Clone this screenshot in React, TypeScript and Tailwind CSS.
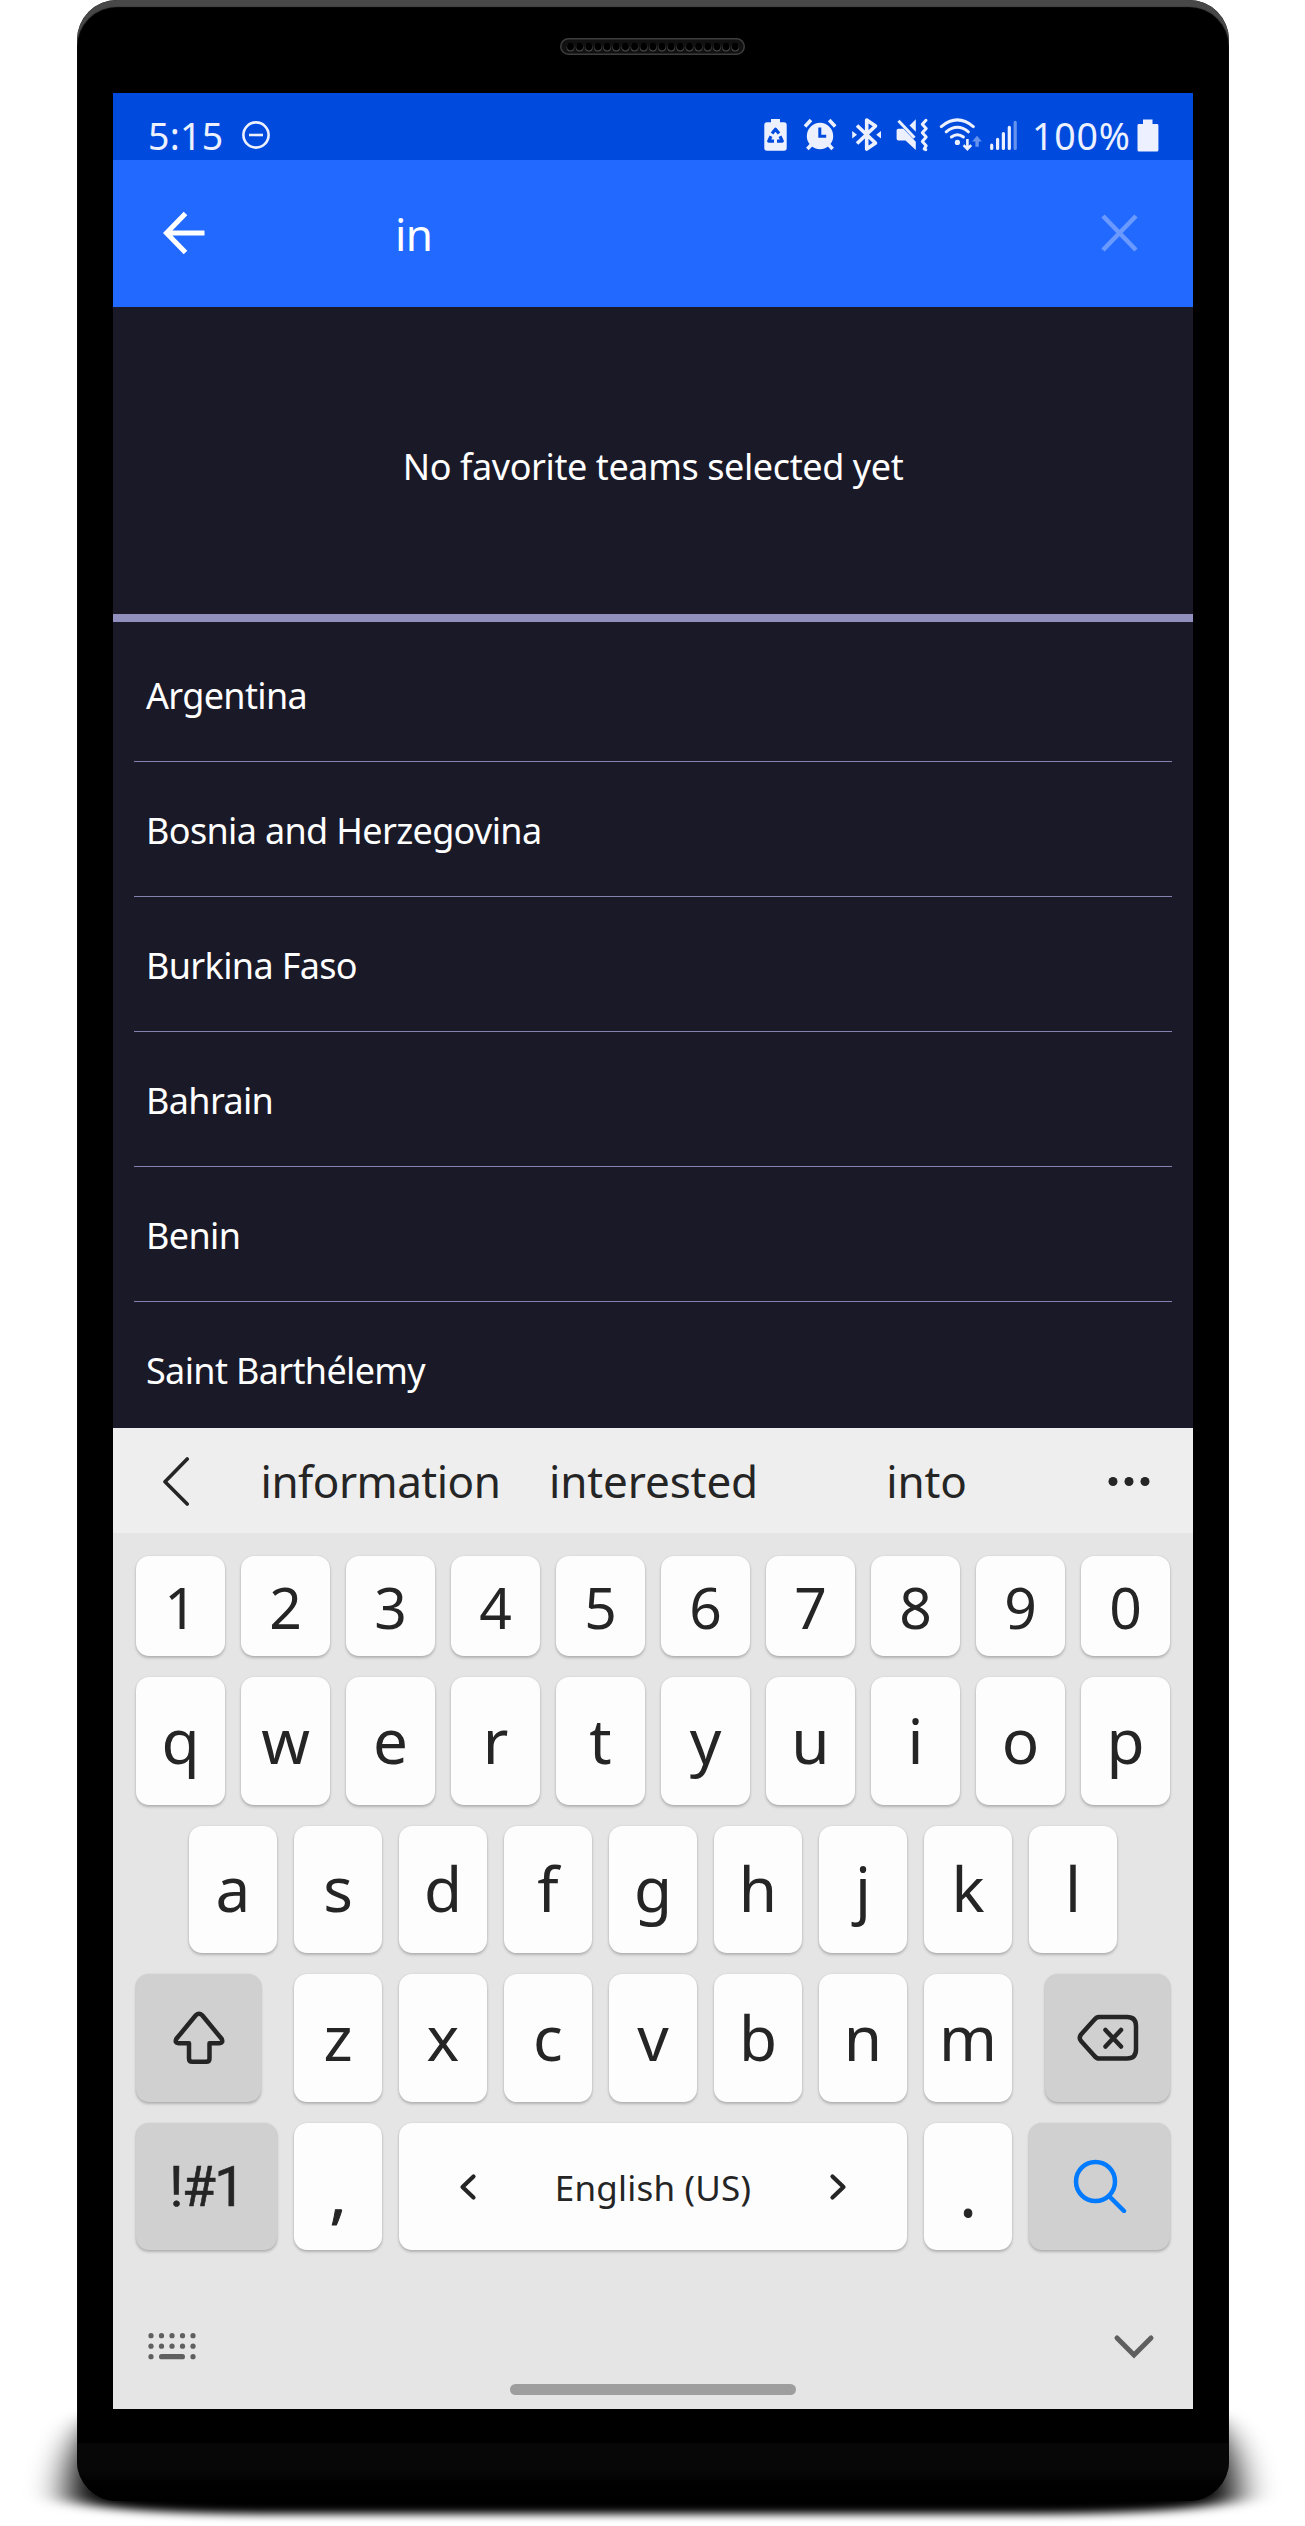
import React from "react";

const TEAMS = [
  "Argentina",
  "Bosnia and Herzegovina",
  "Burkina Faso",
  "Bahrain",
  "Benin",
  "Saint Barthélemy",
];
const SUGGESTIONS = ["information", "interested", "into"];
const HOLES = Array.from({ length: 19 }, (_, i) => 10.5 + i * 9.15);

const KEY_SHADOW = "shadow-[0_2px_3px_rgba(0,0,0,0.22),0_0_2px_rgba(0,0,0,0.10)]";

function Key({
  children,
  className = "",
  muted = false,
}: {
  children: React.ReactNode;
  className?: string;
  muted?: boolean;
}) {
  return (
    <div
      className={`${KEY_SHADOW} flex items-center justify-center rounded-[13px] leading-none text-[#252525] ${
        muted ? "bg-[#d0d0d0]" : "bg-[#fdfdfd]"
      } ${className}`}
    >
      {children}
    </div>
  );
}

function Letters({ text, className }: { text: string; className: string }) {
  return (
    <>
      {text.split("").map((c) => (
        <Key key={c} className={`pb-[3px] text-[62px] ${className}`}>
          {c}
        </Key>
      ))}
    </>
  );
}

function GroundShadow() {
  return (
    <svg className="absolute inset-x-0 bottom-0" width="1305" height="146" viewBox="0 2380 1305 146">
      <defs>
        <filter id="ground" filterUnits="userSpaceOnUse" x="-60" y="2360" width="1425" height="200">
          <feGaussianBlur stdDeviation="19 4" />
        </filter>
      </defs>
      <path
        filter="url(#ground)"
        d="M110 2414 C84 2424 68 2465 69 2495 C70 2507 140 2513 260 2514 L1045 2514 C1165 2513 1235 2507 1236 2495 C1237 2465 1221 2424 1195 2414 Z"
      />
    </svg>
  );
}

function Speaker() {
  return (
    <svg width="185" height="17" viewBox="0 0 185 17">
      <rect x="0.75" y="0.75" width="183.5" height="15.5" rx="7.75" fill="#111" stroke="#3d3d3d" strokeWidth="1.5" />
      {HOLES.map((x) => (
        <g key={x}>
          <ellipse cx={x} cy="9.6" rx="3.9" ry="4" fill="#4a4a4a" />
          <ellipse cx={x} cy="8.6" rx="3.5" ry="3.8" fill="#000" />
        </g>
      ))}
    </svg>
  );
}

function DoNotDisturb() {
  return (
    <svg width="30" height="30" viewBox="0 0 30 30" fill="none" stroke="#edf1ff" strokeWidth="2.6">
      <circle cx="15" cy="15" r="12.6" />
      <path d="M8 15h14" />
    </svg>
  );
}

/* Tray icons between the clock and the battery percentage */
function TrayIcons() {
  return (
    <svg width="256" height="36" viewBox="762 117 256 36" fill="#edf1ff" stroke="none">
      <path d="M771 119h9v3.3h4q2.7 0 2.7 2.7v23q0 2.7-2.7 2.7h-17q-2.7 0-2.7-2.7v-23q0-2.7 2.7-2.7h4z" />
      <g fill="none" stroke="#004bde" strokeWidth="3.2" strokeLinejoin="round">
        <path d="M772 133.6l3.5-4.400 3.5 4.400" />
        <path d="M771 136.200l-2.300 4.900h5.300" />
        <path d="M780 136.200l2.300 4.900h-5.300" />
      </g>

      <circle cx="820" cy="136" r="13.2" />
      <g fill="none" stroke="#edf1ff" strokeWidth="3.6">
        <path d="M805 126.5l6-6.4M835.2 126.5l-6-6.4" />
        <path d="M812 144l-4.6 5M828 144l4.600 5" />
      </g>
      <path d="M819.800 127.500v8.700h6.400" fill="none" stroke="#004bde" strokeWidth="3" />

      <g fill="none" stroke="#edf1ff" strokeWidth="3.6" strokeLinejoin="round">
        <path d="M857 125.500l18.500 17.500-8.800 6v-29l8.800 6L857 143.500" />
      </g>
      <path d="M852.200 131l4.800 3.700-4.800 3.700zM881 131l-4.800 3.700 4.800 3.700z" />

      <path d="M896.600 130.500q0-1.800 1.800-1.800h5l12.400 13v8.300l-10.300-9.500h-7.100q-1.800 0-1.800-1.800zM909.500 125.500l6.300-6.300v12.500z" />
      <path d="M898.500 120.800l16 17" stroke="#edf1ff" strokeWidth="3" />
      <path
        d="M926 120.300l-3.700 3.900 3.900 4.300-3.900 4.300 3.900 4.300-3.900 4.300 3.900 4.300-2 3.200 1.600 .8"
        fill="none"
        stroke="#edf1ff"
        strokeWidth="3"
        strokeLinecap="round"
        strokeLinejoin="round"
      />

      <g fill="none" stroke="#edf1ff" strokeWidth="3" strokeLinecap="round">
        <path d="M941.300 126.600q16-13.400 32 0" />
        <path d="M946.200 131.800q11.200-9 22.200 0" />
        <path d="M951.400 137q6-4.600 12 0" />
      </g>
      <circle cx="957.400" cy="142.400" r="2.600" />
      <path d="M967.400 139v9.500M963.600 145.200l3.800 4 3.800-4" fill="none" stroke="#edf1ff" strokeWidth="2.600" />
      <path d="M977 135.800l4.800 5.600h-3v5.400h-3.400v-5.400h-3.200z" fill="#6593ee" />

      <g fill="none" strokeWidth="3.200" strokeLinecap="round" stroke="#edf1ff">
        <path d="M991.700 145.200v3.300M997.600 139.400v9.100M1003.400 133.600v14.900M1009.300 127.400v21.100" />
        <path d="M1015.200 122.400v26.100" stroke="#6593ee" />
      </g>
    </svg>
  );
}

function BatteryFull() {
  return (
    <svg width="22" height="33" viewBox="0 0 22 33" fill="#edf1ff">
      <path d="M6 0.5h9.5v4.5h4.5q1.4 0 1.4 1.4v24.6q0 1.5-1.5 1.5H2q-1.5 0-1.5-1.5V6.400q0-1.400 1.400-1.400H6z" />
    </svg>
  );
}

function StatusBar() {
  return (
    <div className="flex h-[67px] items-center bg-[#004bde] pt-[17px] text-[37.5px] leading-none text-[#edf1ff]">
      <span className="ml-[35px] w-[93px] pt-[2px] tracking-[0.3px]">5:15</span>
      <DoNotDisturb />
      <div className="ml-auto flex items-center pr-[34px]">
        <TrayIcons />
        <span className="ml-[14px] w-[105px] pt-[2px] tracking-[0.8px]">100%</span>
        <BatteryFull />
      </div>
    </div>
  );
}

function SearchBar() {
  return (
    <div className="flex h-[147px] items-center bg-[#226aff] text-white">
      <svg className="mb-[2px] ml-[49px]" width="44" height="44" viewBox="0 0 44 44" fill="none" stroke="currentColor" strokeWidth="5">
        <path d="M23.500 2.500L4.500 22 23.500 41.500M4.500 22H42.500" />
      </svg>
      <span className="ml-[189px] text-[44px] leading-none tracking-[-0.5px]">in</span>
      <svg className="mr-[54px] mb-[2px] ml-auto" width="38" height="38" viewBox="0 0 38 38" fill="none" stroke="#6a99ff" strokeWidth="4.600">
        <path d="M2 2L35 36M35 2L2 36" />
      </svg>
    </div>
  );
}

function Keyboard() {
  return (
    <div className="relative h-[981px] bg-[#e5e5e5] text-[#252525]">
      <div className="flex h-[105px] items-center bg-[#eeeeee]">
        <svg className="ml-[49px]" width="28" height="50" viewBox="0 0 28 50" fill="none" stroke="currentColor" strokeWidth="3.600" strokeLinecap="round" strokeLinejoin="round">
          <path d="M25.200 3L3 25.700 25.200 48" />
        </svg>
        <div className="ml-[54px] grid w-[819px] grid-cols-3 pt-px text-center text-[44px] leading-none">
          {SUGGESTIONS.map((s) => (
            <span key={s} className={s === "information" ? "tracking-[-0.5px]" : "tracking-[-0.1px]"}>
              {s}
            </span>
          ))}
        </div>
        <svg className="mt-px ml-[45px]" width="42" height="10" viewBox="0 0 42 10" fill="currentColor">
          <circle cx="5" cy="5.500" r="4.500" />
          <circle cx="21" cy="5.500" r="4.500" />
          <circle cx="37" cy="5.500" r="4.500" />
        </svg>
      </div>

      <div className="flex flex-col gap-[21px] px-[23px] pt-[23px]">
        <div className="flex h-[100px] gap-4">
          {"1234567890".split("").map((d) => (
            <Key key={d} className="w-[89px] pt-[3px] text-[57px]">
              {d}
            </Key>
          ))}
        </div>
        <div className="flex h-[128px] gap-4">
          <Letters text="qwertyuiop" className="w-[89px]" />
        </div>
        <div className="flex h-[127px] justify-center gap-[17px]">
          <Letters text="asdfghjkl" className="w-[88px]" />
        </div>
        <div className="flex h-[128px] justify-between">
          <Key muted className="w-[125px]">
            <svg width="54" height="54" viewBox="0 0 54 54" fill="none" stroke="currentColor" strokeWidth="4.500" strokeLinejoin="round">
              <path d="M23.800 4.300Q27 1 30.200 4.300L49.600 27.800Q51.600 32.200 47.500 32.200H37.500V47.500Q37.500 50.800 34.200 50.800H20.300Q17 50.800 17 47.500V32.200H6.500Q2.400 32.200 4.400 27.800Z" />
            </svg>
          </Key>
          <div className="flex gap-[16.500px]">
            <Letters text="zxcvbnm" className="w-[88.500px]" />
          </div>
          <Key muted className="w-[125px]">
            <svg width="62" height="48" viewBox="0 0 62 48" fill="none" stroke="currentColor" strokeWidth="4.500" strokeLinecap="round" strokeLinejoin="round">
              <path d="M22 3H50Q59 3 59 12V35.500Q59 44.500 50 44.500H22Q19.500 44.500 17.500 42L4 27Q1.500 23.700 4 20.500L17.500 5.500Q19.500 3 22 3Z" />
              <path d="M28.500 16L44 32.500M44 16L28.500 32.500" />
            </svg>
          </Key>
        </div>
        <div className="flex h-[127px] justify-between">
          <Key muted className="w-[141px] pt-px font-['Roboto',sans-serif] text-[55px] tracking-[-1.500px] [-webkit-text-stroke:0.600px_#252525]">
            !#1
          </Key>
          <Key className="w-[88px] pt-[12px] text-[62px] [-webkit-text-stroke:1px_#252525]">,</Key>
          <Key className="w-[508px] gap-[78px] text-[35px] tracking-[0.2px]">
            <svg width="18" height="28" viewBox="0 0 18 28" fill="none" stroke="currentColor" strokeWidth="4.200" strokeLinecap="round" strokeLinejoin="round">
              <path d="M14.500 3.500L3.500 14 14.500 24.500" />
            </svg>
            <span className="pt-[2px]">English (US)</span>
            <svg width="18" height="28" viewBox="0 0 18 28" fill="none" stroke="currentColor" strokeWidth="4.200" strokeLinecap="round" strokeLinejoin="round">
              <path d="M3.500 3.500L14.500 14 3.500 24.500" />
            </svg>
          </Key>
          <Key className="w-[88px] pt-[12px] text-[62px] [-webkit-text-stroke:1px_#252525]">.</Key>
          <Key muted className="w-[141px]">
            <svg className="mb-[2px]" width="54" height="54" viewBox="0 0 54 54" fill="none" stroke="#007bff" strokeWidth="4.500" strokeLinecap="round">
              <circle cx="22.500" cy="22.500" r="19.500" />
              <path d="M36.500 37.500L51 52" />
            </svg>
          </Key>
        </div>
      </div>

      <div className="mt-[83px] flex items-start justify-between pr-[38px] pl-[34px]">
        <svg width="50" height="28" viewBox="0 0 50 28" fill="#5f5f5f">
          {[4, 14.500, 25, 35.500, 46].map((x) => (
            <g key={x}>
              <circle cx={x} cy="2.700" r="2.600" />
              <circle cx={x} cy="13.200" r="2.600" />
            </g>
          ))}
          <circle cx="4" cy="23.700" r="2.600" />
          <circle cx="46" cy="23.700" r="2.600" />
          <rect x="12" y="21.100" width="26" height="5.200" rx="2.600" />
        </svg>
        <svg className="mt-px" width="42" height="26" viewBox="0 0 42 26" fill="none" stroke="#5f5f5f" strokeWidth="5" strokeLinecap="round">
          <path d="M4 4L21 21 38 4" />
        </svg>
      </div>
      <div className="absolute bottom-[14px] left-[397px] h-[11px] w-[286px] rounded-full bg-[#9e9e9e]" />
    </div>
  );
}

export default function App() {
  return (
    <div className="relative h-[2526px] w-[1305px] overflow-hidden bg-white font-['Noto_Sans','Open_Sans',sans-serif]">
      <GroundShadow />
      <div className="relative ml-[77px] flex h-[2501px] w-[1152px] flex-col overflow-hidden rounded-[40px] bg-black shadow-[inset_0_7px_1px_#484848]">
        <div className="flex h-[93px] shrink-0 items-start pt-[38px] pl-[483px]">
          <Speaker />
        </div>
        <div className="ml-[36px] flex h-[2316px] w-[1080px] shrink-0 flex-col overflow-hidden bg-[#1a1928] text-white">
          <StatusBar />
          <SearchBar />
          <div className="flex h-[307px] shrink-0 items-center justify-center pt-[12px] text-[36px] leading-none tracking-[-0.4px]">
            No favorite teams selected yet
          </div>
          <div className="h-2 shrink-0 bg-[#918fbd]" />
          <ul className="h-[806px] shrink-0 overflow-hidden px-[21px] pt-[5px]">
            {TEAMS.map((team) => (
              <li
                key={team}
                className="flex h-[135px] items-center border-b border-[#8482b0] pt-[4px] pl-[12px] text-[36px] leading-none tracking-[-0.65px]"
              >
                {team}
              </li>
            ))}
          </ul>
          <Keyboard />
        </div>
        <div className="mt-[34px] h-[58px] bg-gradient-to-b from-[#070707] from-50% to-black" />
      </div>
    </div>
  );
}
